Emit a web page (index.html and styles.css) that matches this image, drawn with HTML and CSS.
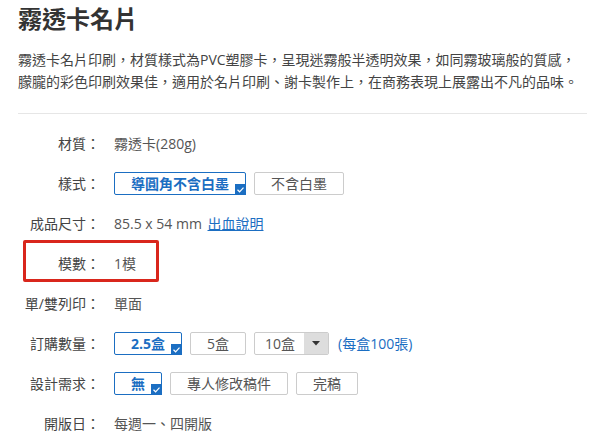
FILE: index.html
```html
<!DOCTYPE html>
<html lang="zh-Hant">
<head>
    <meta charset="UTF-8">
    <meta name="viewport" content="width=device-width, initial-scale=1.0">
    <title>霧透卡名片</title>
    <link rel="stylesheet" href="styles.css">
</head>
<body>
    <div class="product">
        <h1 class="title">霧透卡名片</h1>
        <p class="desc">霧透卡名片印刷，材質樣式為PVC塑膠卡，呈現迷霧般半透明效果，如同霧玻璃般的質感，朦朧的彩色印刷效果佳，適用於名片印刷、謝卡製作上，在商務表現上展露出不凡的品味。</p>
        <hr class="divider">

        <div class="specs">
            <div class="row">
                <div class="label">材質：</div>
                <div class="value">霧透卡(280g)</div>
            </div>
            <div class="row">
                <div class="label">樣式：</div>
                <div class="value opts">
                    <button class="opt selected">導圓角不含白墨<span class="check"><svg width="11" height="11" viewBox="0 0 11 11"><polyline points="2.5,5.8 4.6,7.8 8.5,3.6" fill="none" stroke="#fff" stroke-width="1.2"/></svg></span></button>
                    <button class="opt">不含白墨</button>
                </div>
            </div>
            <div class="row">
                <div class="label">成品尺寸：</div>
                <div class="value">85.5 x 54 mm <a class="link" href="#">出血說明</a></div>
            </div>
            <div class="row marked">
                <div class="label">模數：</div>
                <div class="value">1模</div>
            </div>
            <div class="row">
                <div class="label">單/雙列印：</div>
                <div class="value">單面</div>
            </div>
            <div class="row">
                <div class="label">訂購數量：</div>
                <div class="value opts">
                    <button class="opt selected">2.5盒<span class="check"><svg width="11" height="11" viewBox="0 0 11 11"><polyline points="2.5,5.8 4.6,7.8 8.5,3.6" fill="none" stroke="#fff" stroke-width="1.2"/></svg></span></button>
                    <button class="opt">5盒</button>
                    <div class="select">
                        <span class="select-text">10盒</span>
                        <span class="select-arrow"><svg width="8" height="5" viewBox="0 0 8 5"><polygon points="0,0 8,0 4,4.5" fill="#333"/></svg></span>
                    </div>
                    <span class="note">(每盒100張)</span>
                </div>
            </div>
            <div class="row">
                <div class="label">設計需求：</div>
                <div class="value opts">
                    <button class="opt selected">無<span class="check"><svg width="11" height="11" viewBox="0 0 11 11"><polyline points="2.5,5.8 4.6,7.8 8.5,3.6" fill="none" stroke="#fff" stroke-width="1.2"/></svg></span></button>
                    <button class="opt">專人修改稿件</button>
                    <button class="opt">完稿</button>
                </div>
            </div>
            <div class="row">
                <div class="label">開版日：</div>
                <div class="value">每週一、四開版</div>
            </div>
        </div>
    </div>
</body>
</html>
```

FILE: styles.css
```css
body {
    margin: 0;
    background: #fff;
    font-family: "Open Sans", "Noto Sans CJK TC", sans-serif;
    color: #444;
}

.product {
    padding: 3px 10px 0 18px;
}

.title {
    margin: 0;
    font-size: 24px;
    line-height: 32px;
    font-weight: bold;
    color: #333;
}

.desc {
    margin: 14px 0 0;
    font-size: 14px;
    line-height: 22px;
    color: #444;
}

.divider {
    margin: 20px 0 0;
    border: 0;
    border-top: 1px solid #e6e6e6;
}

.specs {
    padding-top: 9px;
}

.row {
    display: flex;
    align-items: center;
    height: 40px;
    font-size: 14px;
}

.row.marked {
    position: relative;
}

.row.marked::after {
    content: "";
    position: absolute;
    left: 5px;
    top: -3px;
    width: 136px;
    height: 42px;
    box-sizing: border-box;
    border: 3px solid #d9261c;
    border-radius: 2px;
}

.label {
    width: 82px;
    text-align: right;
    color: #444;
    flex-shrink: 0;
}

.value {
    margin-left: 14px;
    color: #555;
}

.opts {
    display: flex;
    align-items: center;
    gap: 8px;
}

.opt {
    position: relative;
    height: 23px;
    padding: 0 16px;
    border: 1px solid #ccc;
    border-radius: 2px;
    background: #fff;
    font-family: inherit;
    font-size: 14px;
    line-height: 21px;
    color: #555;
}

.opt.selected {
    border-color: #1b6ec2;
    color: #1b6ec2;
    font-weight: bold;
}

.check {
    position: absolute;
    right: -1px;
    bottom: -1px;
    width: 11px;
    height: 11px;
    background: #1b6ec2;
    display: flex;
}

.select {
    display: flex;
    width: 75px;
    height: 23px;
    box-sizing: border-box;
    border: 1px solid #ccc;
    border-radius: 2px;
    overflow: hidden;
}

.select-text {
    flex: 1;
    padding-left: 10px;
    line-height: 21px;
    color: #555;
}

.select-arrow {
    width: 24px;
    background: #ddd;
    display: flex;
    align-items: center;
    justify-content: center;
}

.note {
    margin-left: 1px;
    color: #1b6ec2;
}

.link {
    margin-left: 2px;
    color: #1b6ec2;
    text-decoration: underline;
}
```
